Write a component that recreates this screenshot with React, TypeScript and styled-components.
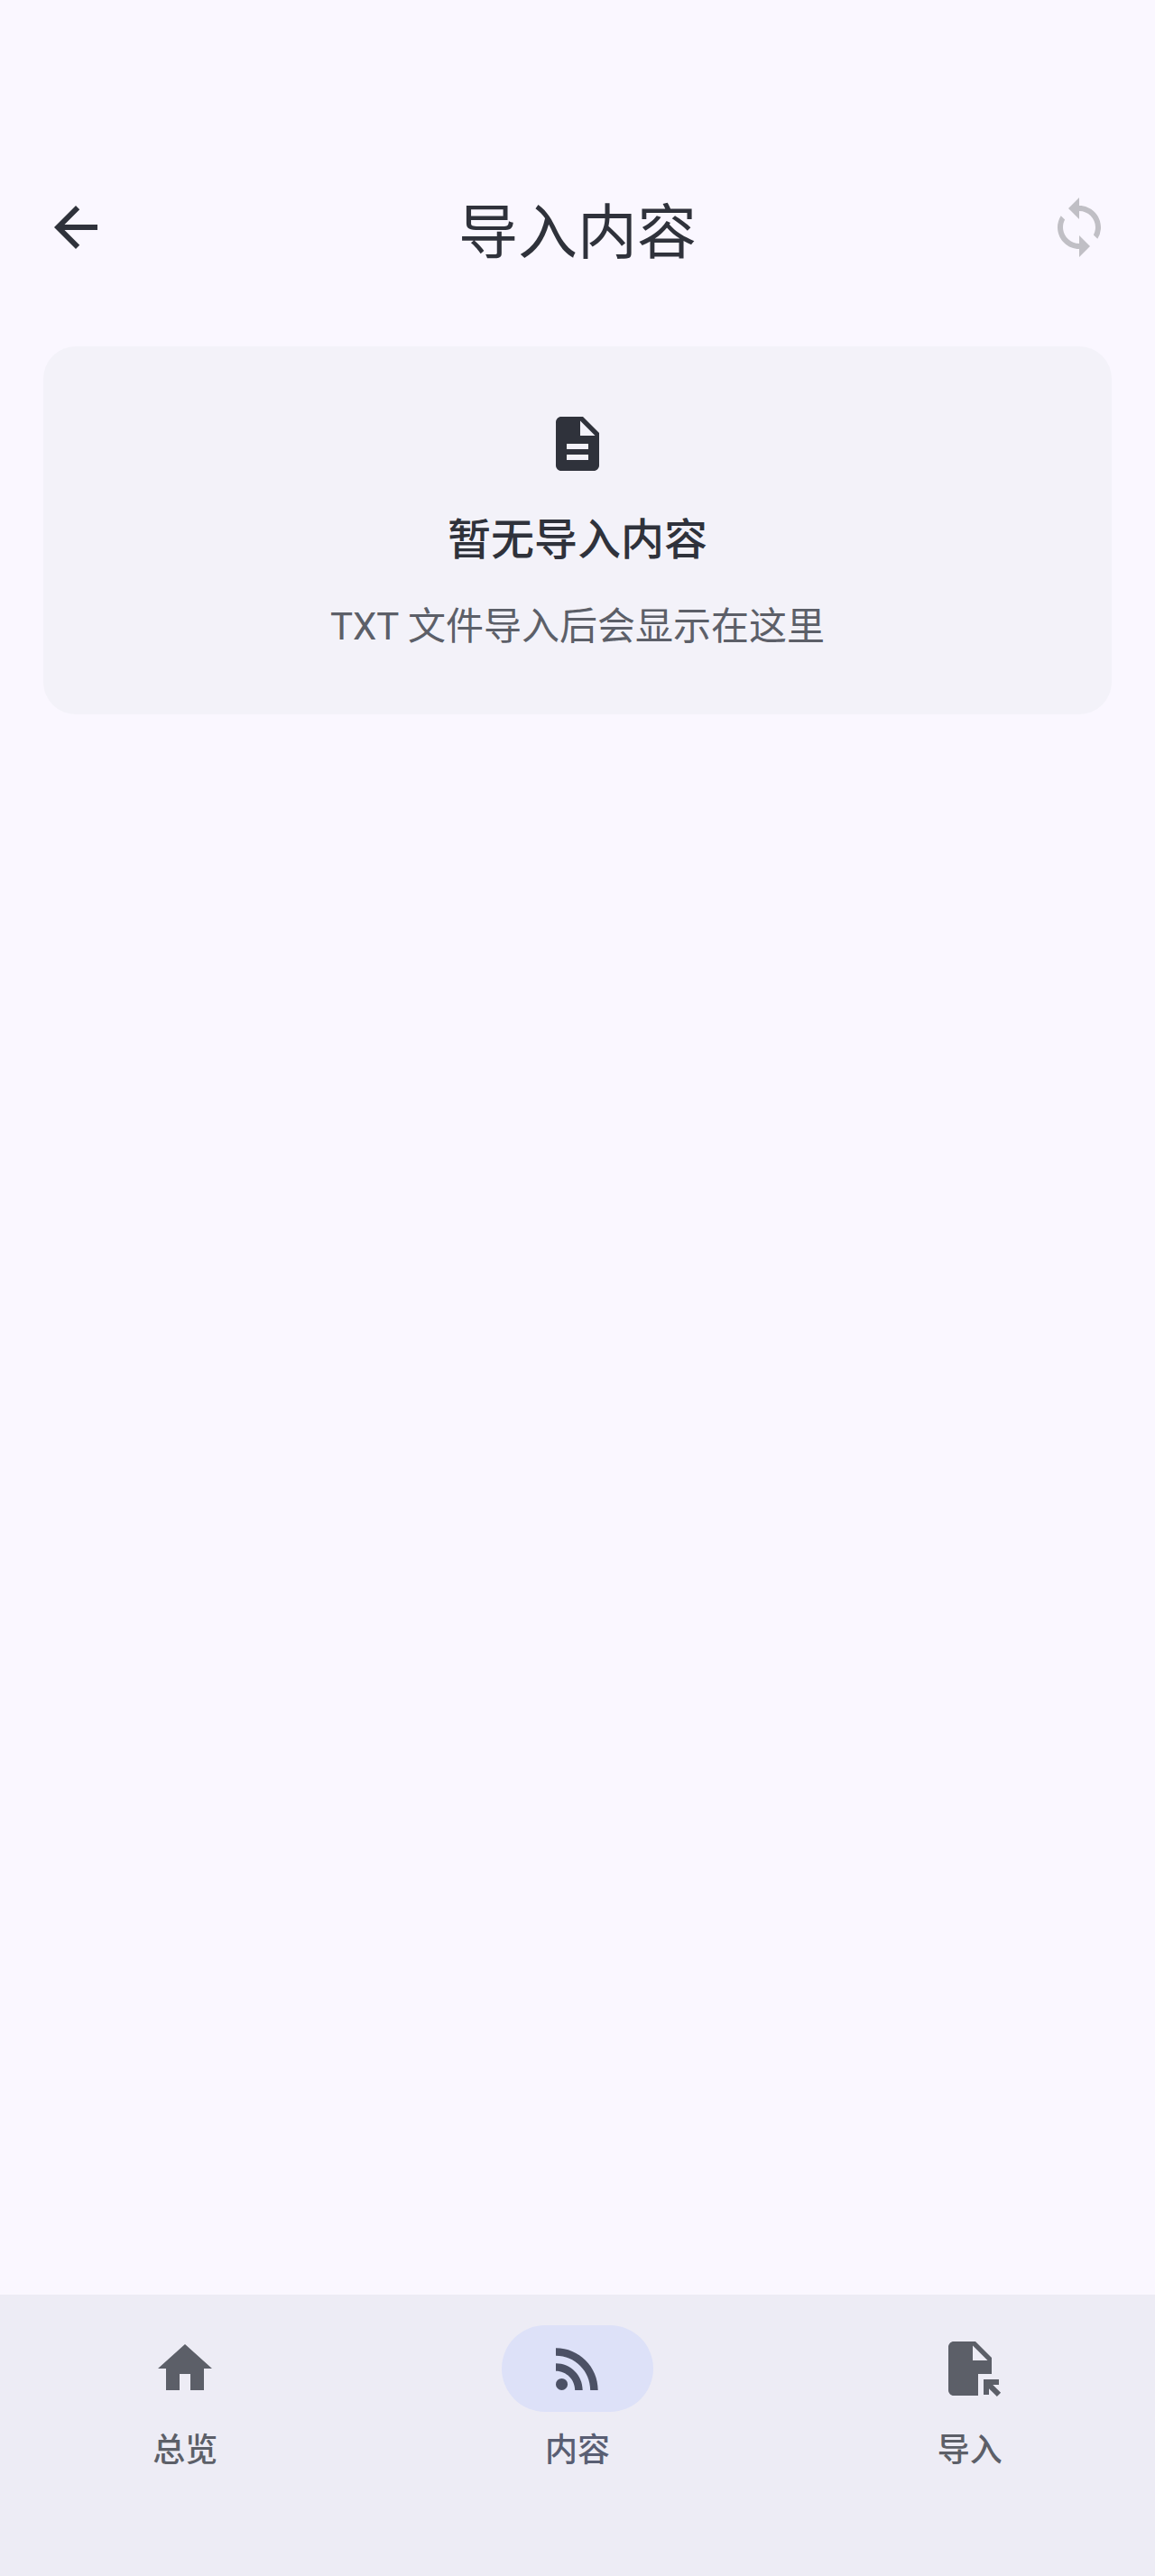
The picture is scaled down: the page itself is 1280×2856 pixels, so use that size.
import React from "react";
import styled, { createGlobalStyle } from "styled-components";
import { MdArrowBack, MdDescription, MdFileOpen, MdHome, MdRssFeed, MdSync } from "react-icons/md";

const color = {
  surface: "#faf7ff",
  card: "#f3f2f9",
  bar: "#edecf5",
  pill: "#dde1f8",
  text: "#2f323b",
  muted: "#5c5f68",
  active: "#595e73",
  activeIcon: "#4c5165",
  disabled: "#c0bfc5",
};

const GlobalStyle = createGlobalStyle`
  * { box-sizing: border-box; }
  body {
    margin: 0;
    background: ${color.surface};
    color: ${color.text};
    font-family: "Noto Sans CJK SC", "Noto Sans", sans-serif;
  }
`;

const Screen = styled.div`
  display: flex;
  flex-direction: column;
  min-height: 100vh;
  padding-top: 156px;
`;

const TopBar = styled.header`
  display: grid;
  grid-template-columns: 144px 1fr 144px;
  align-items: center;
  height: 192px;
  padding: 0 12px;
`;

const IconButton = styled.button`
  display: grid;
  place-items: center;
  width: 144px;
  height: 144px;
  padding: 0;
  border: 0;
  border-radius: 50%;
  background: none;
  color: ${color.text};
  font-size: 72px;
  cursor: pointer;

  &:disabled {
    color: ${color.disabled};
    cursor: default;
  }
`;

const Title = styled.h1`
  margin: 0;
  font-size: 66px;
  line-height: 84px;
  font-weight: 400;
  text-align: center;
`;

const Content = styled.main`
  flex: 1;
  padding: 36px 48px;
`;

const EmptyCard = styled.section`
  display: flex;
  flex-direction: column;
  align-items: center;
  gap: 24px;
  padding: 72px 48px 62px;
  border-radius: 36px;
  background: ${color.card};
  text-align: center;
`;

const CardIcon = styled(MdDescription)`
  font-size: 72px;
`;

const CardTitle = styled.h2`
  margin: 0;
  font-size: 48px;
  line-height: 84px;
  font-weight: 500;
`;

const CardText = styled.p`
  margin: 0;
  color: ${color.muted};
  font-family: Roboto, "Noto Sans CJK SC", sans-serif;
  font-size: 42px;
  line-height: 70px;
`;

const NavBar = styled.nav`
  display: grid;
  grid-template-columns: repeat(3, 1fr);
  gap: 24px;
  padding: 34px 0 116px;
  background: ${color.bar};
`;

const NavItem = styled.a<{ $active?: boolean }>`
  display: flex;
  flex-direction: column;
  align-items: center;
  gap: 12px;
  color: ${(p) => (p.$active ? color.active : color.muted)};
  font-size: 36px;
  line-height: 54px;
  font-weight: 500;
  text-decoration: none;
`;

const Indicator = styled.span<{ $active?: boolean }>`
  display: grid;
  place-items: center;
  width: 168px;
  height: 96px;
  border-radius: 48px;
  background: ${(p) => (p.$active ? color.pill : "transparent")};
  color: ${(p) => (p.$active ? color.activeIcon : "inherit")};
  font-size: 72px;
`;

const destinations = [
  { id: "overview", label: "总览", Icon: MdHome },
  { id: "content", label: "内容", Icon: MdRssFeed },
  { id: "import", label: "导入", Icon: MdFileOpen },
];

export default function App() {
  const current = "content";
  return (
    <>
      <GlobalStyle />
      <Screen>
        <TopBar>
          <IconButton type="button" aria-label="返回">
            <MdArrowBack />
          </IconButton>
          <Title>导入内容</Title>
          <IconButton type="button" aria-label="同步" disabled>
            <MdSync />
          </IconButton>
        </TopBar>
        <Content>
          <EmptyCard>
            <CardIcon aria-hidden />
            <CardTitle>暂无导入内容</CardTitle>
            <CardText>TXT 文件导入后会显示在这里</CardText>
          </EmptyCard>
        </Content>
        <NavBar>
          {destinations.map(({ id, label, Icon }) => (
            <NavItem
              key={id}
              href={`#${id}`}
              $active={id === current}
              aria-current={id === current ? "page" : undefined}
            >
              <Indicator $active={id === current}>
                <Icon aria-hidden />
              </Indicator>
              {label}
            </NavItem>
          ))}
        </NavBar>
      </Screen>
    </>
  );
}
